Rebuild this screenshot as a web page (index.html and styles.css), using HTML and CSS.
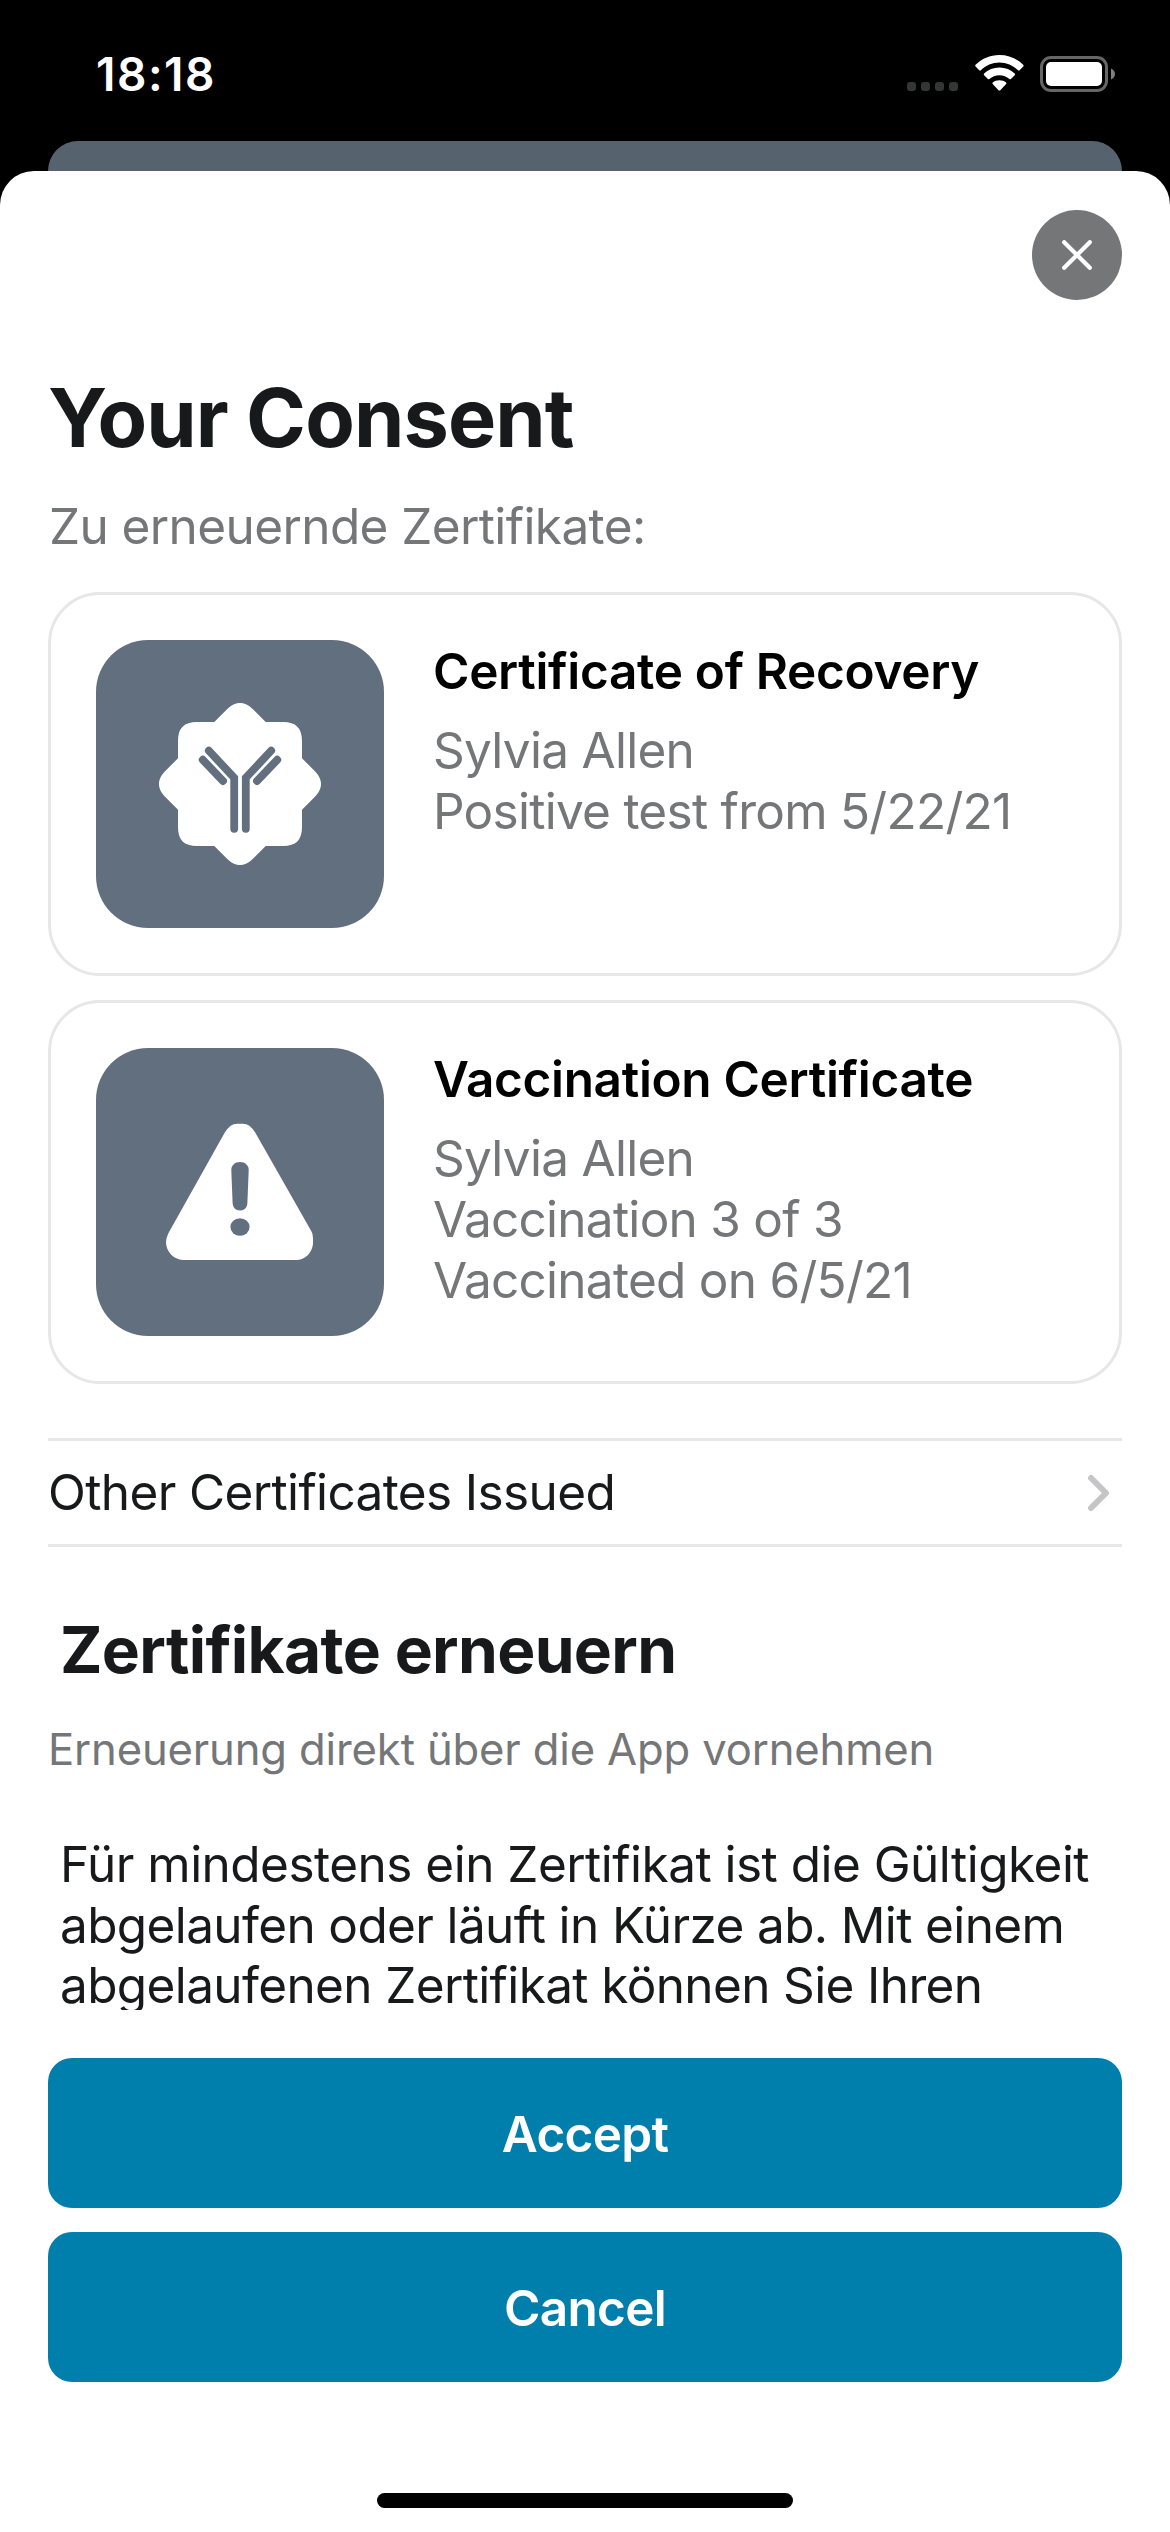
FILE: index.html
```
<!DOCTYPE html>
<html lang="en">
<head>
<meta charset="utf-8">
<title>Your Consent</title>
<link rel="stylesheet" href="styles.css">
</head>
<body>
<div class="screen">
  <header class="status">
    <span class="clock">18:18</span>
    <div class="indicators">
      <svg class="dots" width="51" height="9" viewBox="0 0 51 9" fill="#343535">
        <rect width="9" height="9" rx="3"/><rect x="14" width="9" height="9" rx="3"/><rect x="28" width="9" height="9" rx="3"/><rect x="42" width="9" height="9" rx="3"/>
      </svg>
      <svg class="wifi" width="49" height="36" viewBox="0 0 49 36" fill="#fff">
        <path d="M24.4 0C33.8 0 42.3 3.8 48.2 9.8Q49 10.7 48.2 11.5L44.6 15.2Q43.8 16 42.9 15.2C38 10.5 31.5 7.6 24.4 7.6S10.8 10.5 5.9 15.2Q5 16 4.2 15.2L.6 11.5Q-.2 10.7.6 9.8C6.500 3.800 15 0 24.400 0Z"/>
        <path d="M24.400 12.600C30.500 12.600 35.800 14.800 39.700 18.600Q40.500 19.400 39.700 20.200L35.900 24Q35.200 24.700 34.400 24C31.700 21.700 28.300 20.200 24.400 20.200S17.100 21.700 14.400 24Q13.600 24.700 12.900 24L9.100 20.200Q8.300 19.400 9.100 18.600C13 14.800 18.300 12.600 24.400 12.600Z"/>
        <path d="M24.400 25.200C27 25.200 29.300 26 31.100 27.500Q31.900 28.300 31.100 29.100L25.300 35.200Q24.400 36 23.500 35.200L17.700 29.100Q16.900 28.300 17.700 27.500C19.500 26 21.800 25.200 24.400 25.200Z"/>
      </svg>
      <svg class="battery" width="75" height="36" viewBox="0 0 75 36">
        <rect x="1.500" y="1.500" width="65" height="33" rx="9.500" fill="none" stroke="#666" stroke-width="3"/>
        <rect x="6" y="6" width="56" height="24" rx="5" fill="#fff"/>
        <path d="M71 12.500C73.400 13.400 75 15.500 75 18S73.400 22.600 71 23.500Z" fill="#808080"/>
      </svg>
    </div>
  </header>
  <div class="backdrop"></div>
  <main class="sheet">
    <div class="scroll">
      <div class="toolbar">
        <button class="close" aria-label="Close">
          <svg width="30" height="30" viewBox="0 0 30 30" stroke="#fff" stroke-width="4.200" stroke-linecap="round"><path d="M2.200 2.200 27.800 27.800M27.800 2.200 2.200 27.800"/></svg>
        </button>
      </div>
      <h1 class="title">Your Consent</h1>
      <p class="lead">Zu erneuernde Zertifikate:</p>
      <div class="cards">
        <article class="card">
          <svg class="tile" width="288" height="288" viewBox="-144 -144 288 288">
            <g fill="#fff">
              <path d="M-25.700-62-14-73.700C-9-78.700-5-81 0-81S9-78.700 14-73.700L25.700-62H43C56-62 62-56 62-43V-25.700L73.700-14C78.700-9 81-5 81 0S78.700 9 73.700 14L62 25.700V43C62 56 56 62 43 62H25.700L14 73.700C9 78.700 5 81 0 81S-9 78.700-14 73.700L-25.700 62H-43C-56 62-62 56-62 43V25.700L-73.700 14C-78.700 9-81 5-81 0S-78.700-9-73.700-14L-62-25.700V-43C-62-56-56-62-43-62Z"/>
            </g>
            <g fill="none" stroke="#626f7f" stroke-width="7.800" stroke-linecap="round">
              <path d="M-31.200-33.300-5.800-6.200V44.800M31.200-33.300 5.800-6.200V44.800"/>
              <path d="M-37.300-24.300-17-3M37.300-24.300 17-3"/>
            </g>
          </svg>
          <div class="info">
            <h2 class="name">Certificate of Recovery</h2>
            <p class="detail">Sylvia Allen<br>Positive test from 5/22/21</p>
          </div>
        </article>
        <article class="card">
          <svg class="tile" width="288" height="288" viewBox="0 0 288 288">
            <path fill="#fff" d="M128.500 85Q134 75.800 141 75.800H147Q154 75.800 159.500 85L215.500 183.500Q217 186 217 190V196C216 205 209 212 200.500 212H88C78 212 70 204 70 194Q70 190 72.500 185Z"/>
            <g fill="#626f7f">
              <path d="M144 114C149 114 152.800 117.500 152.700 122L151.400 155C151.200 159.500 148.500 162.400 144 162.400S136.800 159.500 136.600 155L135.300 122C135.200 117.500 139 114 144 114Z"/>
              <ellipse cx="144" cy="179" rx="9.600" ry="8.800"/>
            </g>
          </svg>
          <div class="info">
            <h2 class="name">Vaccination Certificate</h2>
            <p class="detail">Sylvia Allen<br>Vaccination 3 of 3<br>Vaccinated on 6/5/21</p>
          </div>
        </article>
      </div>
      <a class="link-row">
        <span>Other Certificates Issued</span>
        <svg width="23" height="38" viewBox="0 0 23 38" fill="none" stroke="#c5c5c7" stroke-width="6" stroke-linecap="round" stroke-linejoin="round"><path d="M4 4 19 19 4 34"/></svg>
      </a>
      <h2 class="section">Zertifikate erneuern</h2>
      <p class="note">Erneuerung direkt über die App vornehmen</p>
      <p class="body">Für mindestens ein Zertifikat ist die Gültigkeit<br>abgelaufen oder läuft in Kürze ab. Mit einem<br>abgelaufenen Zertifikat können Sie Ihren</p>
    </div>
    <div class="actions">
      <button class="action">Accept</button>
      <button class="action">Cancel</button>
    </div>
    <div class="home"></div>
  </main>
</div>
</body>
</html>
```
FILE: styles.css
```
* { box-sizing: border-box; margin: 0; padding: 0; }
body { background: #000; font-family: Inter, "Liberation Sans", sans-serif; color: #18191a; }
svg { display: block; flex: none; }
button { border: 0; font: inherit; }

.screen { width: 1170px; height: 2532px; display: flex; flex-direction: column; overflow: hidden; }

.status { height: 141px; padding: 55px 55px 0 96px; display: flex; justify-content: space-between; align-items: flex-start; color: #fff; }
.clock { margin-top: -9px; font-size: 46px; line-height: 56px; font-weight: 600; letter-spacing: 1.5px; }
.indicators { display: flex; align-items: flex-start; }
.dots { margin: 27px 17px 0 0; }
.wifi { margin-right: 16px; }
.battery { margin-top: 1px; }

.backdrop { height: 30px; margin: 0 48px; background: #56636f; border-radius: 30px 30px 0 0; }

.sheet { flex: 1; min-height: 0; background: #fff; border-radius: 34px 34px 0 0; display: flex; flex-direction: column; }
.scroll { height: 1839px; padding: 39px 48px 0; overflow: hidden; }
.toolbar { display: flex; justify-content: flex-end; }
.close { width: 90px; height: 90px; border-radius: 50%; background: #757678; display: flex; align-items: center; justify-content: center; }

.title { margin-top: 69px; font-size: 81px; line-height: 98px; font-weight: 700; letter-spacing: -.9px; }
.lead { margin: 29px 0 35px 1px; font-size: 49.5px; line-height: 61px; letter-spacing: -.6px; color: #757678; }

.cards { display: flex; flex-direction: column; gap: 24px; }
.card { height: 384px; padding: 45px; border: 3px solid #e7e7e7; border-radius: 52px; display: flex; gap: 48px; }
.tile { border-radius: 52px; background: #626f7f; }
.info { padding: 1px 0 0 1px; font-size: 49.5px; line-height: 61px; white-space: nowrap; }
.name { font-size: inherit; font-weight: 600; letter-spacing: -.32px; color: #000; }
.detail { margin-top: 18px; letter-spacing: -.73px; color: #757678; }

.link-row { height: 109px; margin-top: 54px; padding-right: 12px; border: solid #e7e7e7; border-width: 3px 0; display: flex; align-items: center; justify-content: space-between; font-size: 49.5px; line-height: 61px; letter-spacing: -.63px; }

.section { margin: 64px 0 0 12px; font-size: 64px; line-height: 77px; font-weight: 700; letter-spacing: -.65px; }
.note { margin-top: 35px; font-size: 43.6px; line-height: 53px; letter-spacing: -.14px; color: #757678; }
.body { margin: 58px 0 0 12px; font-size: 49.5px; line-height: 60.7px; letter-spacing: -.63px; white-space: nowrap; }
.body::first-line { letter-spacing: -.52px; }

.actions { padding: 48px 48px 0; display: flex; flex-direction: column; gap: 24px; }
.action { height: 150px; padding-top: 1px; border-radius: 24px; background: #007fad; color: #fff; font-size: 49.5px; font-weight: 600; letter-spacing: -.7px; }

.home { width: 416px; height: 15px; margin: 111px auto 0; border-radius: 8px; background: #000; }
```
